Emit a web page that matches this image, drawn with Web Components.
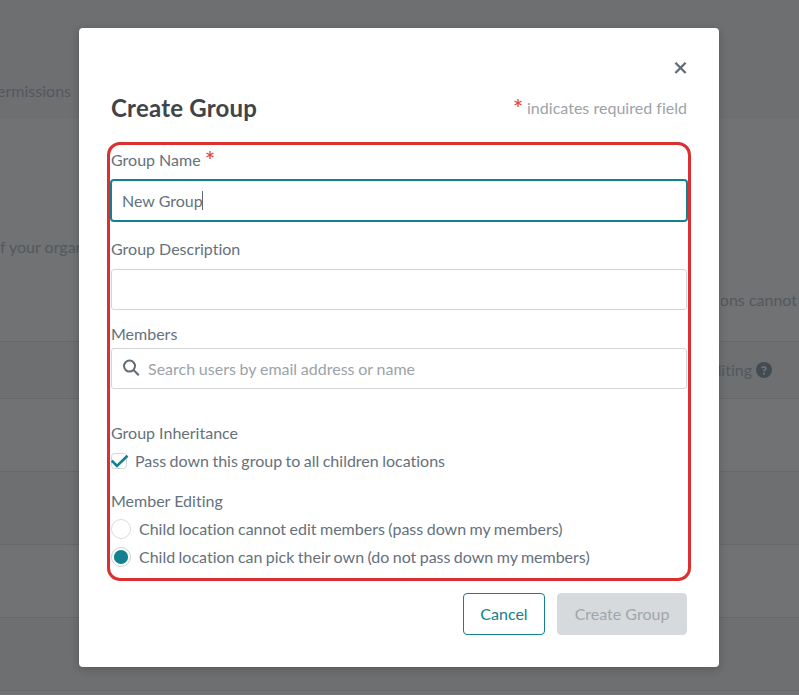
<!DOCTYPE html>
<html lang="en">
<head>
<meta charset="utf-8">
<title>Create Group</title>
<style>
html,body{margin:0;width:799px;height:695px;overflow:hidden}
body{font:16px/24px Lato,"Liberation Sans",sans-serif;color:#65717c;background:#707274;font-variant-ligatures:none}
</style>
</head>
<body>
<group-page></group-page>
<group-dialog>
  <span slot="title">Create Group</span>
  <form-field label="Group Name" required style="height:89px"><text-box value="New Group" focused></text-box></form-field>
  <form-field label="Group Description" style="height:85px"><text-box></text-box></form-field>
  <form-field label="Members" tight style="height:99px"><text-box search placeholder="Search users by email address or name"></text-box></form-field>
  <option-group label="Group Inheritance" style="height:68px">
    <choice-item type="check" checked style="word-spacing:-.65px">Pass down this group to all children locations</choice-item>
  </option-group>
  <option-group label="Member Editing" style="height:104px">
    <choice-item type="radio" style="word-spacing:-.65px">Child location cannot edit members (pass down my members)</choice-item>
    <choice-item type="radio" checked style="word-spacing:-.7px">Child location can pick their own (do not pass down my members)</choice-item>
  </option-group>
  <action-button slot="actions" style="width:82px">Cancel</action-button>
  <action-button slot="actions" disabled style="width:130px">Create Group</action-button>
</group-dialog>
<script>
function define(name, render) {
  customElements.define(name, class extends HTMLElement {
    connectedCallback() {
      if (this.shadowRoot) return;
      this.attachShadow({mode: 'open'}).innerHTML = '<style>*{box-sizing:border-box}</style>' + render(this);
    }
  });
}

define('required-mark', () => `<style>:host{display:inline-block;width:8px;height:8px}svg{display:block}</style>
<svg width="8" height="8" viewBox="0 0 8 8" fill="none" stroke="#e04540" stroke-width="1.3"><path d="M4 0V8M.5 2L7.5 6M7.5 2L.5 6"/></svg>`);

define('group-page', () => `<style>
:host{display:flex;flex-direction:column;height:695px;overflow:hidden;color:#54585d}
.top{height:119px;flex:none;padding-top:79px;background:#6d6f71}
.body{height:222px;display:flex;justify-content:space-between;flex:none}
.clip{width:79px;overflow:hidden;white-space:nowrap}
.left{padding-top:116px;height:150px}
.right{padding-top:169px;display:flex;justify-content:flex-end;padding-right:2px;width:78px}
.top .clip{width:71px;display:flex;justify-content:flex-end}
.row{height:73px;flex:none;border-top:1px solid #65676a}
.row:nth-child(odd){background:#6d6f71}
.row:last-child{height:5px}
.head{height:57px;padding:16px 27px 0 0;display:flex;justify-content:flex-end}
.head div{display:flex;justify-content:flex-end;width:56px;overflow:hidden;white-space:nowrap;gap:4px}
svg{flex:none;margin-top:4px}
</style>
<div class="top"><div class="clip">ermissions</div></div>
<div class="body"><div class="clip left">f your organ</div><div class="clip right">ions cannot</div></div>
<div class="row head"><div>diting<svg width="16" height="16" viewBox="0 0 16 16"><circle cx="8" cy="8" r="8" fill="#434b52"/><path d="M5.7 6.2C6.6 4.2 10 4.4 9.9 6.4C9.8 7.7 8 7.8 8 9.3" fill="none" stroke="#707274" stroke-width="1.8"/><circle cx="8" cy="11.7" r="1.1" fill="#707274"/></svg></div></div>
<div class="row"></div><div class="row"></div><div class="row"></div><div class="row"></div><div class="row"></div>`);

define('group-dialog', () => `<style>
:host{position:absolute;left:79px;top:28px;width:640px;height:639px;box-sizing:border-box;padding:32px;background:#fff;border-radius:4px;box-shadow:0 2px 8px rgba(0,0,0,.22);display:flex;flex-direction:column}
.close{height:32px;display:flex;justify-content:flex-end;padding-top:1px}
header{display:flex;justify-content:space-between;align-items:center;height:32px}
h1{margin:0;font-size:24px;line-height:32px;font-weight:700;letter-spacing:.22px;color:#404448}
.note{color:#9ba3aa;display:flex;gap:5px}
.note required-mark{margin-top:3px}
.note span{font-variant-ligatures:normal;letter-spacing:.02px}
.fields{margin-top:24px;height:445px;flex:none;position:relative}
.outline{position:absolute;left:-4px;top:-6px;width:584px;height:439px;border:3px solid #dc3030;border-radius:13px;pointer-events:none}
footer{display:flex;justify-content:flex-end;gap:12px}
</style>
<div class="close"><svg width="13" height="13" viewBox="0 0 13 13"><path d="M1.4 1.8L11.6 12M11.6 1.8L1.4 12" stroke="#606b75" stroke-width="2.3"/></svg></div>
<header><h1><slot name="title"></slot></h1><div class="note"><required-mark></required-mark><span>indicates required field</span></div></header>
<div class="fields"><slot></slot><div class="outline"></div></div>
<footer><slot name="actions"></slot></footer>`);

define('form-field', el => `<style>
:host{display:block}
.label{height:24px;display:flex;gap:5px;margin-bottom:${el.hasAttribute('tight') ? 2 : 8}px}
required-mark{margin-top:3px}
</style><div class="label"><span>${el.getAttribute('label')}</span>${el.hasAttribute('required') ? '<required-mark></required-mark>' : ''}</div><slot></slot>`);

define('text-box', el => `<style>
:host{display:flex;box-sizing:border-box;height:41px;border:1px solid #d2d6d8;border-radius:3px;padding:8px 10px;background:#fff}
:host([focused]){border-color:#12808e;box-shadow:0 0 0 1px #12808e}
.caret{width:1px;height:19px;margin:2px 0 0 -1px;background:#606b75}
.hint{color:#9ba3aa;word-spacing:-.35px}
svg{margin:2px 8px 0 1px}
</style>${el.hasAttribute('search') ? '<svg width="17" height="17" viewBox="0 0 17 17" fill="none" stroke="#606b75" stroke-width="2"><circle cx="6.5" cy="7.1" r="5.5"/><path d="M10.5 11L15.8 16.2"/></svg>' : ''}
<span>${el.getAttribute('value') || ''}</span>${el.hasAttribute('focused') ? '<i class="caret"></i>' : ''}<span class="hint">${el.getAttribute('placeholder') || ''}</span>`);

define('option-group', el => `<style>
:host{display:flex;flex-direction:column;gap:4px}.label{height:24px}
</style><div class="label">${el.getAttribute('label')}</div><slot></slot>`);

define('choice-item', el => {
  const on = el.hasAttribute('checked');
  const check = `<svg width="18" height="20" viewBox="0 0 18 20" fill="none"><rect x=".5" y="2.5" width="15" height="15" rx="3" stroke="#d2d6d8"/>${on ? '<path d="M.8 9.6L6 15L16.5 4.8" stroke="#12808e" stroke-width="2.6"/>' : ''}</svg>`;
  const radio = `<svg width="20" height="20" viewBox="0 0 20 20"><circle cx="10" cy="10" r="9.5" fill="none" stroke="${on ? '#c3d5d7' : '#d9dcde'}"/>${on ? '<circle cx="10" cy="10" r="7.1" fill="#12808e"/>' : ''}</svg>`;
  return `<style>:host{display:flex;height:24px;white-space:nowrap}svg{margin:2px ${el.getAttribute('type') === 'check' ? 6 : 8}px 0 0;flex:none}</style>${el.getAttribute('type') === 'check' ? check : radio}<span><slot></slot></span>`;
});

define('action-button', () => `<style>
:host{display:flex;box-sizing:border-box;height:42px;align-items:center;justify-content:center;border:1px solid #12808e;border-radius:4px;color:#12808e}
:host([disabled]){background:#d6dadd;border-color:#d6dadd;color:#9fa6ab}
</style><slot></slot>`);
</script>
</body>
</html>
